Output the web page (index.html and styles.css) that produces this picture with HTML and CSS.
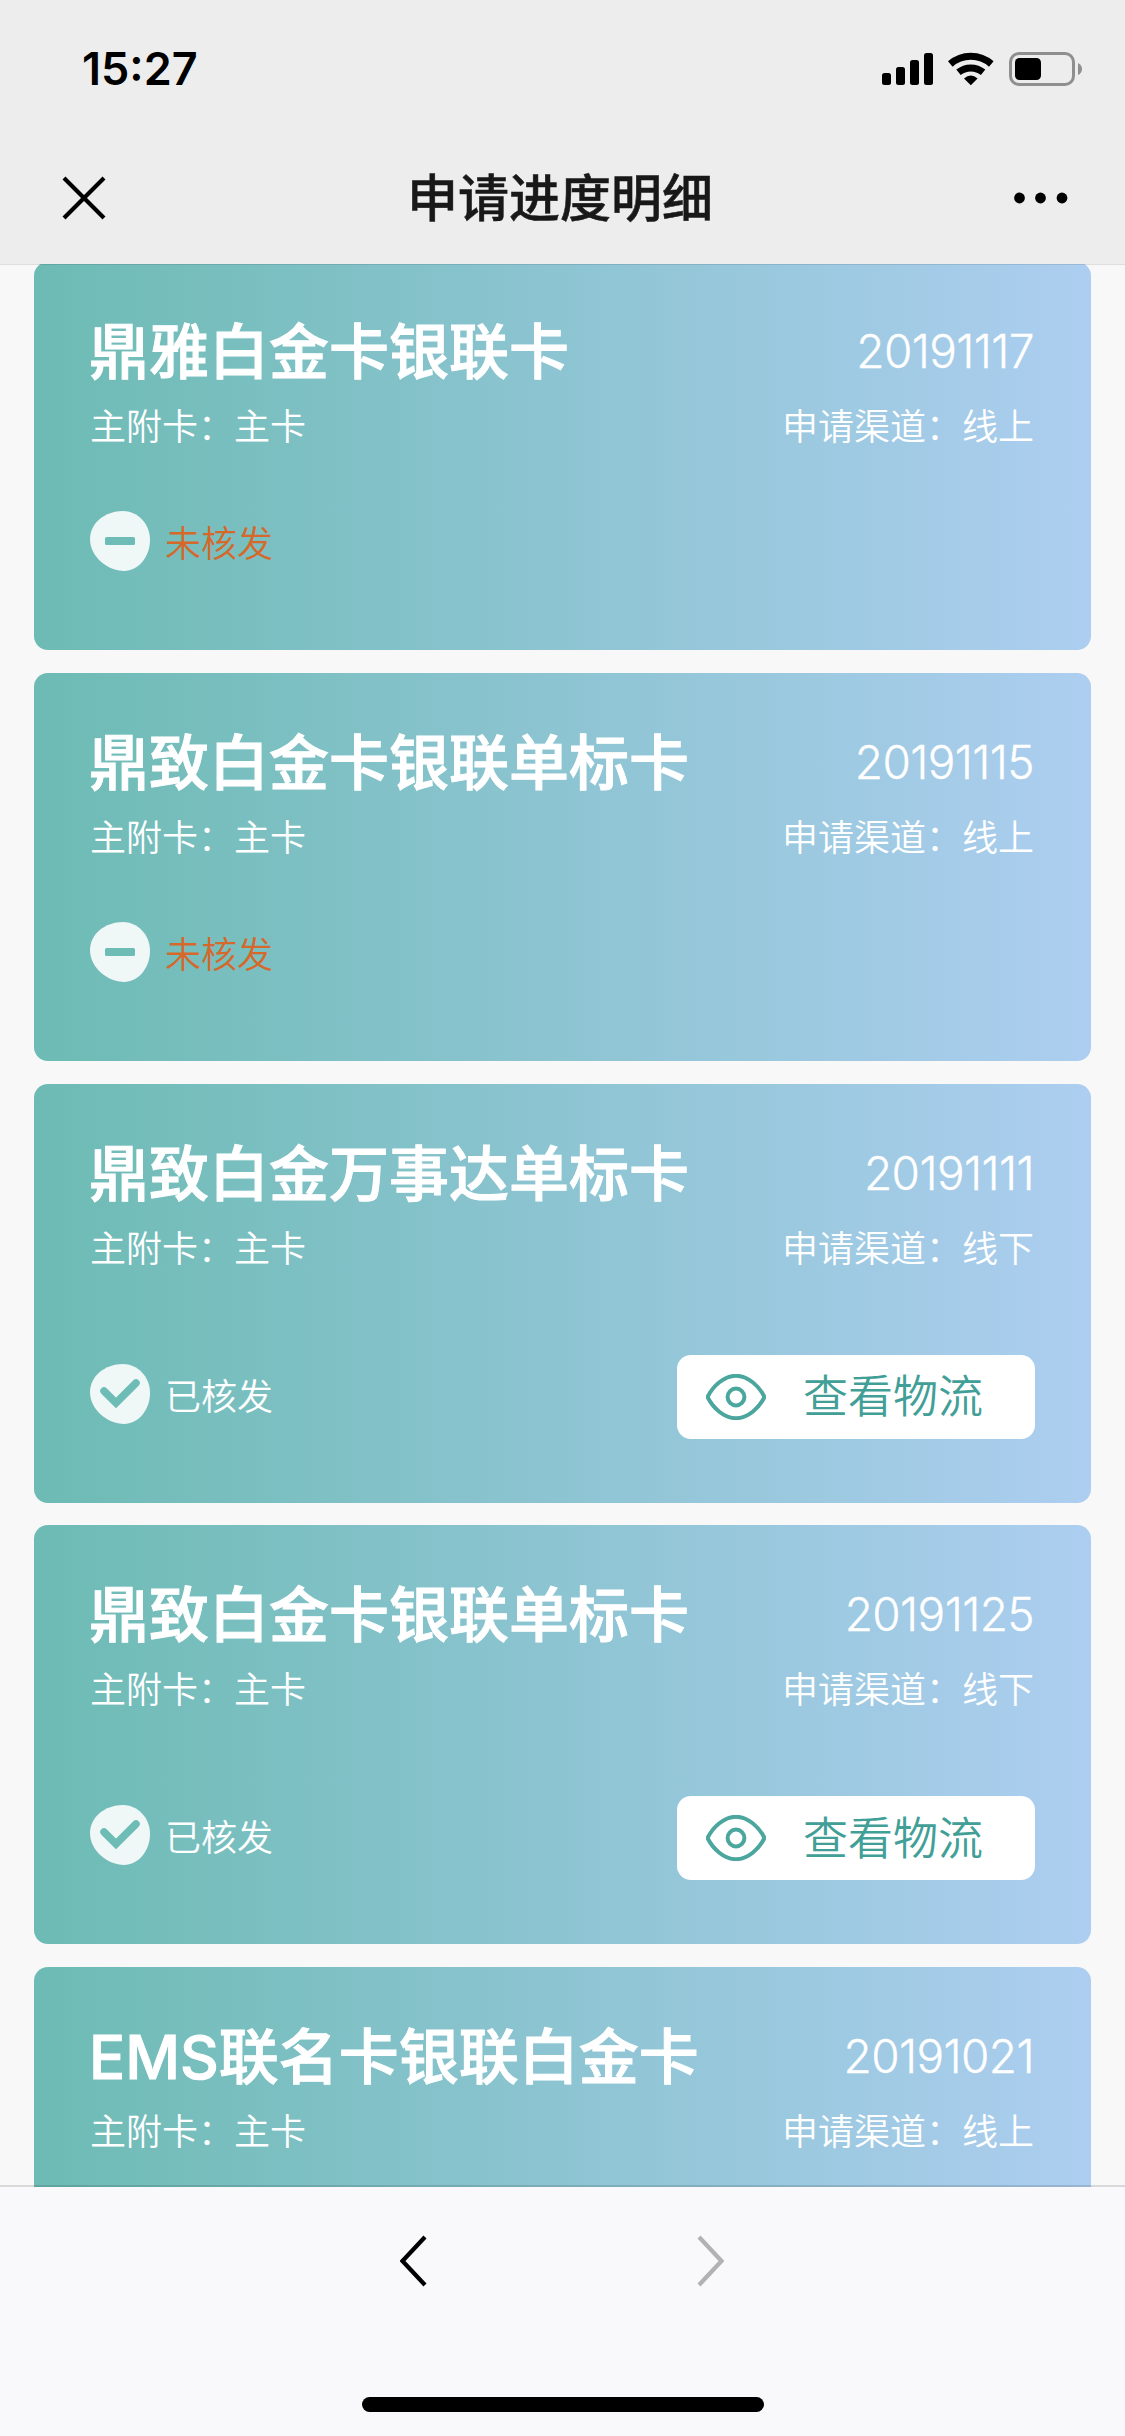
FILE: index.html
```html
<!DOCTYPE html>
<html lang="zh-CN">
<head>
<meta charset="utf-8">
<title>申请进度明细</title>
<link rel="stylesheet" href="styles.css">
</head>
<body>
<svg class="sprite" aria-hidden="true">
  <symbol id="minus" viewBox="0 0 60 60">
    <path class="badge" d="M33 0C47 0 60 12 60 29C60 46 48 60 34 60C18 60 0 46 0 28C0 12 15 0 33 0Z"/>
    <rect class="badge-mark" x="15" y="26" width="30" height="8" rx="1.500"/>
  </symbol>
  <symbol id="check" viewBox="0 0 60 60">
    <path class="badge" d="M33 0C47 0 60 12 60 29C60 46 48 60 34 60C18 60 0 46 0 28C0 12 15 0 33 0Z"/>
    <path class="badge-tick" d="M14 27L26 39L46 19"/>
  </symbol>
  <symbol id="eye" viewBox="0 0 60 46">
    <path class="eye-line" d="M1.5 23C7 12 18 1.8 30 1.8S53 12 58.5 23C53 34 42 44.2 30 44.2S7 34 1.500 23Z"/>
    <circle class="eye-line" cx="30" cy="23" r="8.4"/>
  </symbol>
</svg>
<div class="screen">
  <header class="top">
    <div class="status-bar">
      <span class="time">15:27</span>
      <svg class="indicators" viewBox="0 0 200 34">
        <rect x="0" y="21" width="9" height="12" rx="2.5"/>
        <rect x="14" y="15" width="9" height="18" rx="2.5"/>
        <rect x="28" y="8" width="9" height="25" rx="2.5"/>
        <rect x="42" y="1" width="9" height="32" rx="2.5"/>
        <path class="wifi" d="M68.300 12A31 31 0 0 1 109.300 12M76.500 20.300A19.500 19.500 0 0 1 101.100 20.300"/>
        <path d="M82 26.500Q88.800 20.500 95.600 26.500L88.800 33.300Z"/>
        <rect class="battery" x="128.500" y="1.500" width="63" height="31" rx="8.500"/>
        <rect x="133" y="6" width="26" height="22" rx="4.500"/>
        <path class="battery-tip" d="M196 11Q200 13 200 17T196 23Z"/>
      </svg>
    </div>
    <div class="nav">
      <svg class="close" viewBox="0 0 44 44"><path d="M2 2L42 42M42 2L2 42"/></svg>
      <h1 class="nav-title">申请进度明细</h1>
      <svg class="more" viewBox="0 0 54 12"><circle cx="5.500" cy="6" r="5.400"/><circle cx="26.500" cy="6" r="5.400"/><circle cx="48" cy="6" r="5.400"/></svg>
    </div>
  </header>
  <main class="list">
    <article class="card">
      <div class="row head"><h2 class="name">鼎雅白金卡银联卡</h2><span class="date">20191117</span></div>
      <div class="row sub"><span>主附卡：主卡</span><span>申请渠道：线上</span></div>
      <div class="row foot"><div class="state rejected"><svg class="state-icon"><use href="#minus"/></svg><span class="state-text">未核发</span></div></div>
    </article>
    <article class="card">
      <div class="row head"><h2 class="name">鼎致白金卡银联单标卡</h2><span class="date">20191115</span></div>
      <div class="row sub"><span>主附卡：主卡</span><span>申请渠道：线上</span></div>
      <div class="row foot"><div class="state rejected"><svg class="state-icon"><use href="#minus"/></svg><span class="state-text">未核发</span></div></div>
    </article>
    <article class="card tall">
      <div class="row head"><h2 class="name">鼎致白金万事达单标卡</h2><span class="date">20191111</span></div>
      <div class="row sub"><span>主附卡：主卡</span><span>申请渠道：线下</span></div>
      <div class="row foot"><div class="state"><svg class="state-icon"><use href="#check"/></svg><span class="state-text">已核发</span></div>
        <a class="track"><svg class="eye"><use href="#eye"/></svg><span>查看物流</span></a></div>
    </article>
    <article class="card tall">
      <div class="row head"><h2 class="name">鼎致白金卡银联单标卡</h2><span class="date">20191125</span></div>
      <div class="row sub"><span>主附卡：主卡</span><span>申请渠道：线下</span></div>
      <div class="row foot"><div class="state"><svg class="state-icon"><use href="#check"/></svg><span class="state-text">已核发</span></div>
        <a class="track"><svg class="eye"><use href="#eye"/></svg><span>查看物流</span></a></div>
    </article>
    <article class="card">
      <div class="row head"><h2 class="name">EMS联名卡银联白金卡</h2><span class="date">20191021</span></div>
      <div class="row sub"><span>主附卡：主卡</span><span>申请渠道：线上</span></div>
    </article>
  </main>
  <footer class="bottom">
    <div class="history">
      <svg class="arrow" viewBox="0 0 27 52"><path d="M25 2L2.500 26L25 50"/></svg>
      <svg class="arrow disabled" viewBox="0 0 27 52"><path d="M2 2L24.500 26L2 50"/></svg>
    </div>
    <div class="home-bar"></div>
  </footer>
</div>
</body>
</html>
```
FILE: styles.css
```css
* { box-sizing: border-box; margin: 0; padding: 0; }
body { font-family: Inter, "Noto Sans CJK SC", sans-serif; background: #f8f8f8; }
svg { display: block; }
.sprite { display: none; }
.screen { display: flex; flex-direction: column; width: 1125px; height: 2436px; overflow: hidden; }

.top { flex: none; position: relative; z-index: 1; height: 264px; background: #ededed; box-shadow: 0 1px 0 rgba(0, 0, 0, .1); }
.status-bar { display: flex; justify-content: space-between; align-items: center; height: 138px; padding: 0 43px 0 82px; }
.time { font-size: 45px; font-weight: 600; line-height: 54px; color: #000; }
.indicators { width: 200px; height: 34px; }
.wifi { fill: none; stroke: #000; stroke-width: 7; }
.battery { fill: none; stroke: #8f8f8f; stroke-width: 3; }
.battery-tip { fill: #8f8f8f; }
.nav { display: flex; justify-content: space-between; align-items: center; height: 120px; padding: 0 57px 0 62px; }
.close { width: 44px; height: 44px; margin-top: -1px; }
.close path { fill: none; stroke: #000; stroke-width: 4.2; }
.nav-title { font-size: 51px; font-weight: 500; line-height: 60px; margin-top: 2px; color: #181818; -webkit-text-stroke: .5px; }
.more { width: 54px; height: 12px; }

.list { flex: 1; min-height: 0; display: flex; flex-direction: column; gap: 22.6px; margin-top: -2px; padding: 0 34px; overflow: hidden; }
.card { flex: none; height: 388.3px; padding: 60px 57px 0 56px; border-radius: 14px; background: linear-gradient(90deg, #6dbbb4, #adcef0); color: #fff; }
.card.tall { height: 418.9px; }
.row { display: flex; justify-content: space-between; }
.head { height: 60px; align-items: center; }
.name { margin-left: -1px; font-size: 60px; font-weight: 500; line-height: 60px; -webkit-text-stroke: 1px; }
.date { margin-top: -2px; font-size: 46px; font-weight: 300; line-height: 60px; letter-spacing: -.6px; -webkit-text-stroke: .3px; }
.sub { margin-top: 27px; font-size: 36px; font-weight: 350; line-height: 36px; }
.foot { margin-top: 66px; }
.state { display: flex; align-items: center; gap: 15px; height: 60px; font-size: 36px; font-weight: 350; line-height: 36px; }
.state-text { margin-top: 6px; }
.rejected { color: #d4692b; }
.state-icon { width: 60px; height: 60px; }
.badge { fill: #eff7f7; }
.badge-mark { fill: #6dbcb6; }
.badge-tick { fill: none; stroke: #6dbcb6; stroke-width: 7.5; stroke-linecap: round; stroke-linejoin: miter; }
.tall .foot { margin-top: 88px; }
.tall .state { margin-top: 9px; }
.track { display: flex; align-items: center; gap: 37px; width: 358px; height: 84px; padding-left: 29px; margin-right: -1px; border-radius: 14px; background: #fff; color: #429f97; font-size: 45px; font-weight: 350; line-height: 45px; }
.eye { width: 60px; height: 46px; }
.eye-line { fill: none; stroke: #4ba69e; stroke-width: 4; }

.bottom { flex: none; position: relative; height: 249px; padding-top: 48px; background: #f9f9fc; box-shadow: 0 -2px 0 rgba(0, 0, 0, .12); }
.history { display: flex; justify-content: space-between; width: 324px; margin-left: 400px; }
.arrow { width: 27px; height: 52px; fill: none; stroke: #000; stroke-width: 4.2; }
.disabled { stroke: #b2b2b4; }
.home-bar { width: 402px; height: 15px; margin: 110px auto 0; border-radius: 8px; background: #000; }
```
